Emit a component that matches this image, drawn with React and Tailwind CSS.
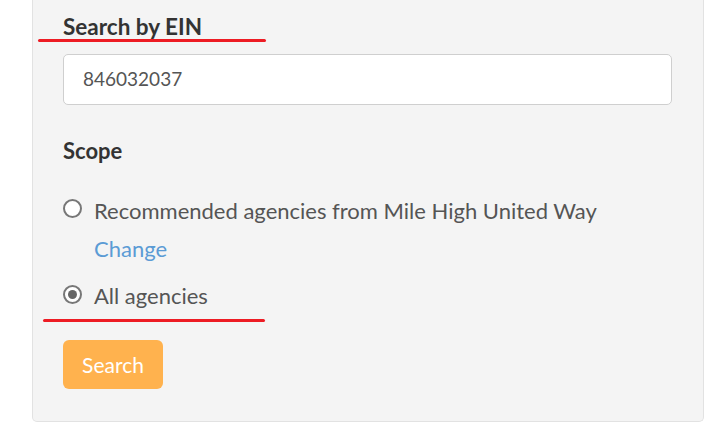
export default function App() {
  const font = { fontFamily: 'Lato, "Open Sans", sans-serif' };
  return (
    <div className="relative w-[708px] h-[447px] bg-white overflow-hidden" style={font}>
      <div className="ml-[32px] w-[672px] h-[422px] bg-[#f4f4f4] border border-t-0 border-[#e2e2e2] rounded-b-[5px] pl-[30px] pr-[31px] pt-[13px]">
        <div className="text-[22.5px] leading-[28px] font-bold text-[#333]">Search by EIN</div>
        <div className="mt-[13px] h-[51px] bg-white border border-[#cfcfcf] rounded-[5px] flex items-center pl-[19px] text-[19px] text-[#555]">
          846032037
        </div>
        <div className="mt-[32px] text-[22px] leading-[28px] font-bold text-[#333]">Scope</div>
        <div className="mt-[32px] flex items-start gap-[12px]">
          <span className="mt-[2px] w-[19px] h-[19px] rounded-full border-[2px] border-[#777] bg-white shrink-0"></span>
          <span className="text-[22px] leading-[28px] text-[#555]">Recommended agencies from Mile High United Way</span>
        </div>
        <div className="mt-[10px] ml-[31px] text-[22px] leading-[28px] text-[#5b9bd5]">Change</div>
        <div className="mt-[19px] flex items-start gap-[12px]">
          <span className="mt-[3px] w-[19px] h-[19px] rounded-full border-[2px] border-[#777] bg-white shrink-0 flex items-center justify-center">
            <span className="w-[9px] h-[9px] rounded-full bg-[#666]"></span>
          </span>
          <span className="text-[22px] leading-[28px] text-[#555]">All agencies</span>
        </div>
        <div className="mt-[30px] w-[100px] h-[49px] rounded-[6px] bg-[#ffb24e] text-white text-[21px] flex items-center justify-center">
          Search
        </div>
      </div>
      <div className="absolute left-[38px] top-[39px] w-[228px] h-[3px] rounded-full bg-[#ed1c24]"></div>
      <div className="absolute left-[43px] top-[319px] w-[222px] h-[3px] rounded-full bg-[#ed1c24]"></div>
    </div>
  );
}
